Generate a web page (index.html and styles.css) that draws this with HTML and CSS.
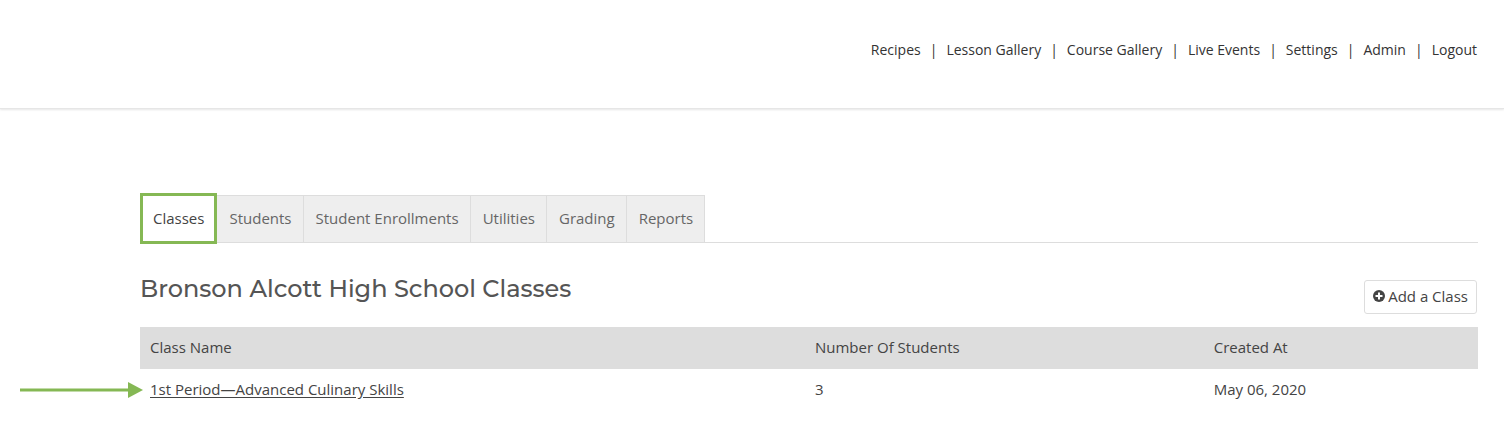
FILE: index.html
```html
<!DOCTYPE html>
<html lang="en">
<head>
<meta charset="utf-8">
<title>Classes</title>
<link rel="stylesheet" href="styles.css">
</head>
<body>
<header class="site-header">
  <nav class="site-nav" aria-label="Main">
    <a href="#">Recipes</a><span>|</span><a href="#">Lesson Gallery</a><span>|</span><a href="#">Course Gallery</a><span>|</span><a href="#">Live Events</a><span>|</span><a href="#">Settings</a><span>|</span><a href="#">Admin</a><span>|</span><a href="#">Logout</a>
  </nav>
</header>
<main class="content">
  <nav class="tabs" aria-label="Sections">
    <a class="tab tab-active" href="#" aria-current="page">Classes</a>
    <a class="tab" href="#">Students</a>
    <a class="tab" href="#">Student Enrollments</a>
    <a class="tab" href="#">Utilities</a>
    <a class="tab" href="#">Grading</a>
    <a class="tab" href="#">Reports</a>
  </nav>
  <div class="title-row">
    <h1>Bronson Alcott High School Classes</h1>
    <button class="add-button" type="button">
      <svg class="plus" viewBox="0 0 12 12" aria-hidden="true"><circle cx="6" cy="6" r="6"/><path d="M6 2.5v7M2.5 6h7"/></svg>Add a Class
    </button>
  </div>
  <table class="classes">
    <thead>
      <tr><th class="col-name">Class Name</th><th class="col-count">Number Of Students</th><th>Created At</th></tr>
    </thead>
    <tbody>
      <tr>
        <td><svg class="arrow" viewBox="0 0 124 16" aria-hidden="true"><path class="arrow-line" d="M0 8h110"/><path class="arrow-head" d="M108 0l15 8-15 8z"/></svg><a href="#">1st Period—Advanced Culinary Skills</a></td>
        <td>3</td>
        <td>May 06, 2020</td>
      </tr>
    </tbody>
  </table>
</main>
</body>
</html>
```
FILE: styles.css
```css
* { box-sizing: border-box; }
body {
  margin: 0;
  background: #fff;
  color: #444;
  font: 15px/20px "Open Sans", sans-serif;
}
.site-header {
  display: flex;
  justify-content: flex-end;
  padding: 40px 27px 48px;
  border-bottom: 1px solid #e6e6e6;
  box-shadow: 0 1px 2px rgba(0, 0, 0, 0.1);
}
.site-nav { display: flex; gap: 9px; color: #333; font-size: 14px; font-weight: 500; }
.site-nav a { color: #333; text-decoration: none; }
.content { padding: 84px 26px 24px 140px; }
.tabs { display: flex; border-bottom: 1px solid #ddd; }
.tab {
  margin-top: 2px;
  padding: 12px 11px 14px 12px;
  border: 1px solid #ddd;
  border-width: 1px 1px 0 0;
  background: #eee;
  color: #666;
  text-decoration: none;
}
.tab-active {
  margin: 0 0 -2px;
  padding: 12px 10px;
  border: 3px solid #85b854;
  background: #fff;
  color: #444;
}
.title-row { display: flex; justify-content: space-between; margin-top: 28px; }
h1 {
  margin: 0;
  color: #555;
  font: 500 24px/36px Montserrat, "Open Sans", sans-serif;
}
.add-button {
  display: flex;
  align-items: center;
  gap: 3px;
  margin: 9px 1px 13px;
  padding: 5px 8px 7px;
  border: 1px solid #ddd;
  border-radius: 3px;
  background: #fff;
  color: #444;
  font: inherit;
}
.plus { width: 12px; height: 12px; fill: #444; stroke: #fff; stroke-width: 2; }
.plus circle { stroke: none; }
.classes { width: 100%; border-collapse: collapse; table-layout: fixed; }
.classes th, .classes td { padding: 10px; text-align: left; }
.classes th { padding-bottom: 12px; background: #ddd; font-weight: 400; }
.classes td { position: relative; }
.classes a { color: #444; text-underline-offset: 2px; }
.col-name { width: 49.7%; }
.col-count { width: 29.8%; }
.arrow { position: absolute; left: -120px; top: 13px; width: 124px; height: 16px; }
.arrow-line { stroke: #85b854; stroke-width: 3; }
.arrow-head { fill: #85b854; }
```
